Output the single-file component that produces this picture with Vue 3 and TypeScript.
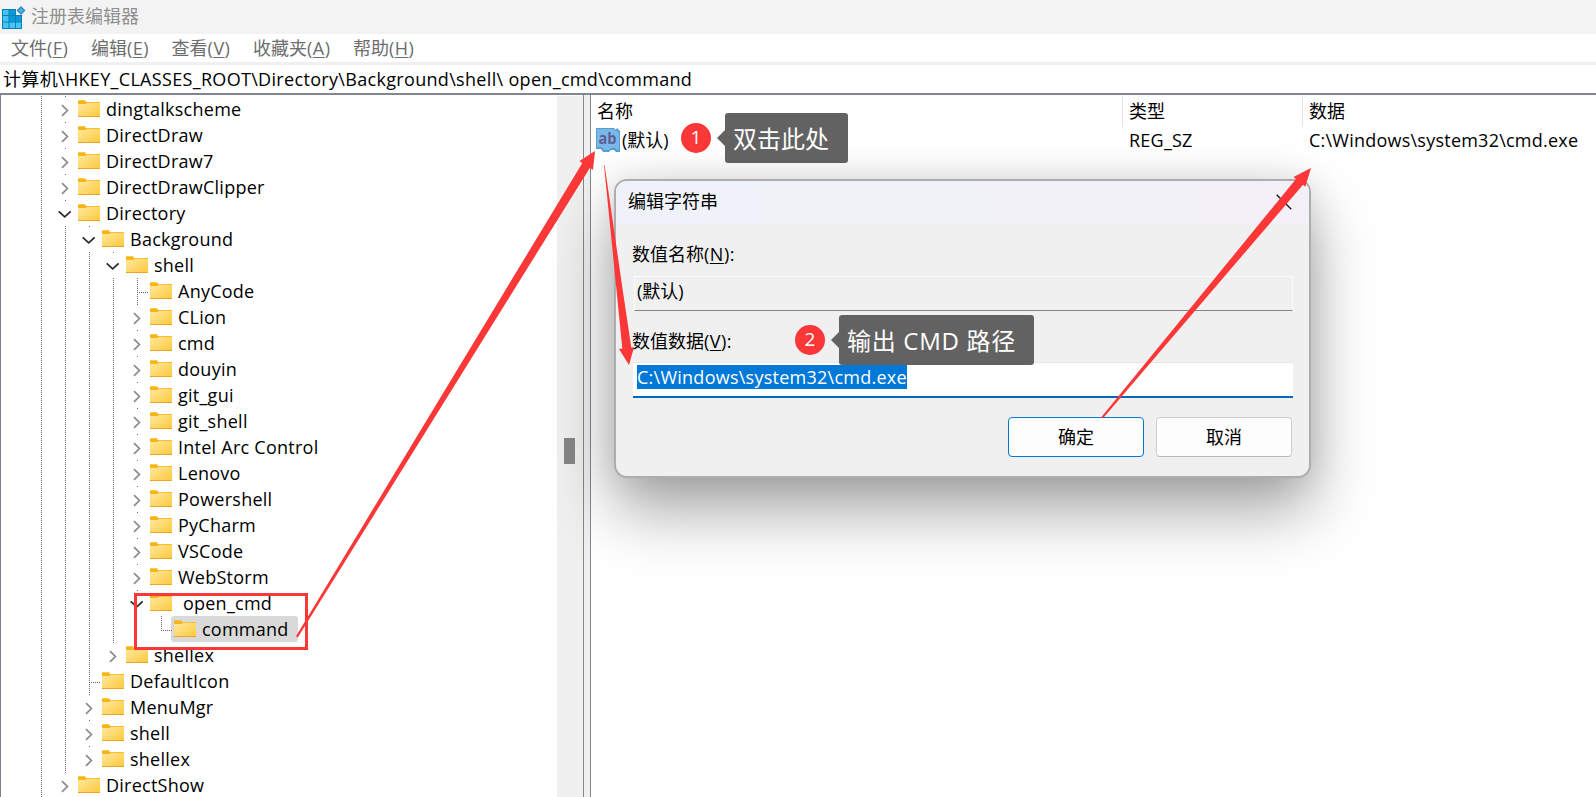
<script setup lang="ts">
type Guide = 'none' | 'line' | 'dot' | 'tee' | 'corner'
interface Node {
  label: string
  level: number
  state: 'open' | 'closed' | 'leaf'
  selected?: boolean
  guides: Guide[]
}

const raw: [string, number, Node['state']][] = [
  ['dingtalkscheme', 1, 'closed'],
  ['DirectDraw', 1, 'closed'],
  ['DirectDraw7', 1, 'closed'],
  ['DirectDrawClipper', 1, 'closed'],
  ['Directory', 1, 'open'],
  ['Background', 2, 'open'],
  ['shell', 3, 'open'],
  ['AnyCode', 4, 'leaf'],
  ['CLion', 4, 'closed'],
  ['cmd', 4, 'closed'],
  ['douyin', 4, 'closed'],
  ['git_gui', 4, 'closed'],
  ['git_shell', 4, 'closed'],
  ['Intel Arc Control', 4, 'closed'],
  ['Lenovo', 4, 'closed'],
  ['Powershell', 4, 'closed'],
  ['PyCharm', 4, 'closed'],
  ['VSCode', 4, 'closed'],
  ['WebStorm', 4, 'closed'],
  [' open_cmd', 4, 'open'],
  ['command', 5, 'leaf'],
  ['shellex', 3, 'closed'],
  ['DefaultIcon', 2, 'leaf'],
  ['MenuMgr', 2, 'closed'],
  ['shell', 2, 'closed'],
  ['shellex', 2, 'closed'],
  ['DirectShow', 1, 'closed'],
]

// An ancestor column keeps its line only while a later sibling exists at that level.
function hasNext(index: number, level: number): boolean {
  for (let i = index + 1; i < raw.length; i++) {
    if (raw[i][1] < level) return false
    if (raw[i][1] === level) return true
  }
  return level <= 1
}

const nodes: Node[] = raw.map(([label, level, state], i) => {
  const guides: Guide[] = []
  for (let l = 0; l < level; l++) guides.push(l === 0 || hasNext(i, l) ? 'line' : 'none')
  guides.push(state !== 'leaf' ? 'dot' : hasNext(i, level) ? 'tee' : 'corner')
  return { label, level, state, guides, selected: label === 'command' }
})

const menus = [
  { text: '文件', key: 'F' },
  { text: '编辑', key: 'E' },
  { text: '查看', key: 'V' },
  { text: '收藏夹', key: 'A' },
  { text: '帮助', key: 'H' },
]
</script>

<template>
  <div class="window">
    <header class="titlebar">
      <svg class="app-icon" width="24" height="24" viewBox="0 0 24 24">
        <rect x="0" y="3" width="20" height="20" fill="#0a7fb8" />
        <g fill="#45c4f6">
          <rect x="1" y="4" width="5.500" height="5" /><rect x="7.500" y="4" width="5.500" height="5" fill="#0a9ad6" />
          <rect x="1" y="10" width="5.500" height="5.500" /><rect x="7.500" y="10" width="5.500" height="5.500" fill="#0a9ad6" /><rect x="14" y="10" width="5" height="5.500" fill="#0a9ad6" />
          <rect x="1" y="16.500" width="5.500" height="5.500" /><rect x="7.500" y="16.500" width="5.500" height="5.500" /><rect x="14" y="16.500" width="5" height="5.500" />
        </g>
        <path d="M14 0h10v9H14z" fill="#f3f3f3" />
        <path d="M19 0l4.500 4.500L19 9l-4.500-4.500z" fill="#2c93c6" />
        <path d="M19 2.200l2.300 2.300L19 6.800l-2.300-2.300z" fill="#55b4dc" />
      </svg>
      <span>注册表编辑器</span>
    </header>

    <nav class="menubar">
      <span v-for="m in menus" :key="m.key">{{ m.text }}<span class="key">(<u>{{ m.key }}</u>)</span></span>
    </nav>

    <div class="address"><span>计算机\HKEY_CLASSES_ROOT\Directory\Background\shell\ open_cmd\command</span></div>

    <main class="panes">
      <section class="tree">
        <div class="rows">
          <div v-for="(n, i) in nodes" :key="i" class="row">
            <span v-for="(g, l) in n.guides" :key="l" class="guide" :class="g">
              <svg v-if="l === n.level && n.state === 'closed'" class="chev" width="24" height="26" viewBox="0 0 24 26">
                <path d="M9 9.200l5.400 5.300-5.400 5.300" fill="none" stroke="#8b8b8b" stroke-width="1.700" />
              </svg>
              <svg v-if="l === n.level && n.state === 'open'" class="chev" width="24" height="26" viewBox="0 0 24 26">
                <path d="M5.700 11.300l6 5.500 6-5.500" fill="none" stroke="#2b2b2b" stroke-width="1.800" />
              </svg>
            </span>
            <span class="item" :class="{ selected: n.selected }">
              <svg width="22" height="18" viewBox="0 0 22 18">
                <defs>
                  <linearGradient id="fold" x1="0" y1="0" x2="1" y2="1">
                    <stop offset="0" stop-color="#ffe8a0" /><stop offset="1" stop-color="#fdc93c" />
                  </linearGradient>
                </defs>
                <path d="M0 1.200Q0 .2 1 .2h6l1 1.800H22v3H0z" fill="#f7b417" />
                <path d="M0 4h7.500l1.500-1.200h13V17H0z" fill="url(#fold)" />
                <rect y="16" width="22" height="1" fill="#eaa721" />
              </svg>
              <span class="label">{{ n.label }}</span>
            </span>
          </div>
        </div>
        <div class="scrollbar"><i /></div>
      </section>
      <div class="splitter" />
      <section class="values">
        <div class="cols head"><span>名称</span><span>类型</span><span>数据</span></div>
        <div class="cols data">
          <span class="name">
            <svg width="24" height="24" viewBox="0 0 24 24">
              <path d="M0 0h18l1 1.500h1L21 0l3 3v21h-4l-2-2h-3l-2 2H7l-2-3H0z" fill="#559fd3" />
              <path d="M1 1h16l2 2h2l2 2v17h-2l-2-2h-4l-2 2H8l-2-3H1z" fill="#7ab8ea" />
              <text x="2.500" y="15.500" font-size="16" font-weight="700" fill="#5d5f94" textLength="18" lengthAdjust="spacingAndGlyphs">ab</text>
            </svg><span>(默认)</span>
          </span>
          <span>REG_SZ</span>
          <span class="path">C:\Windows\system32\cmd.exe</span>
        </div>
      </section>
    </main>

    <div class="dialog">
      <div class="dlg-title">
        <span>编辑字符串</span>
        <svg width="16" height="16" viewBox="0 0 16 16"><path d="M.7.7l14.600 14.600M15.300.7L.7 15.300" stroke="#111" stroke-width="1.300" /></svg>
      </div>
      <div class="dlg-body">
        <label>数值名称<span class="key">(<u>N</u>):</span></label>
        <div class="field readonly">(默认)</div>
        <label class="second">数值数据<span class="key">(<u>V</u>):</span></label>
        <div class="field active"><mark>C:\Windows\system32\cmd.exe</mark></div>
        <div class="buttons">
          <button class="primary">确定</button>
          <button>取消</button>
        </div>
      </div>
    </div>

    <svg class="marks" width="1596" height="797" viewBox="0 0 1596 797">
      <g fill="#fc3737">
        <path d="M296 636.300L582.200 163.200 579.500 161 595 151l-2 18.700-3.200-1.800L297.800 637.500z" />
        <path d="M604 165h.6L622.700 290l8.600 57.500 2.700-.3L629 365l-10-15.900 3.300-.5L616.500 290z" />
        <path d="M1101.200 417.300L1296 178.900l-2.500-2L1311 168l-5.700 18.700-2.300-2L1102.800 418.500z" />
      </g>
      <rect x="135.500" y="594.500" width="171" height="54" fill="none" stroke="#fc3737" stroke-width="3" />
    </svg>

    <div class="callout first"><b>1</b><p>双击此处</p></div>
    <div class="callout second"><b>2</b><p>输出 CMD 路径</p></div>
  </div>
</template>

<style>
html,
body {
  margin: 0;
  overflow: hidden;
}
</style>

<style scoped>
.window {
  position: relative;
  display: flex;
  flex-direction: column;
  width: 1596px;
  height: 797px;
  overflow: hidden;
  background: #fff;
  color: #000;
  font-family: 'Open Sans', 'Noto Sans CJK SC', sans-serif;
  font-size: 18px;
  line-height: 26px;
  white-space: pre;
}
.titlebar {
  display: flex;
  align-items: center;
  gap: 5px;
  flex: none;
  height: 34px;
  padding-left: 2px;
  background: #f3f3f3;
  color: #8f8f8f;
}
.titlebar span {
  margin-top: -2px;
}
.app-icon {
  margin-top: 2px;
}
u {
  text-underline-offset: 2px;
  text-decoration-thickness: 1px;
}
.key {
  letter-spacing: 0.5px;
}
.menubar {
  display: flex;
  align-items: center;
  gap: 22.500px;
  flex: none;
  height: 28px;
  padding-left: 11px;
  color: #6d6d6d;
}
.address {
  flex: none;
  box-sizing: border-box;
  height: 33px;
  padding: 1px 0 0 3px;
  border-top: 3px solid #f0f0f0;
  border-bottom: 2px solid #82868f;
  letter-spacing: 0.32px;
}
.panes {
  display: flex;
  flex: 1;
  min-height: 0;
}
.tree {
  display: flex;
  justify-content: space-between;
  box-sizing: border-box;
  width: 584px;
  padding-top: 1px;
  border: solid #82868f;
  border-width: 0 1px;
  overflow: hidden;
}
.rows {
  padding-left: 28px;
}
.row {
  display: flex;
  height: 26px;
}
.guide {
  position: relative;
  flex: none;
  width: 24px;
  height: 26px;
}
.guide.line {
  background: repeating-linear-gradient(#6a6a6a 0 1px, transparent 1px 2px) 12px 0 / 1px 26px no-repeat;
}
.guide.dot {
  background: linear-gradient(#6a6a6a, #6a6a6a) 12px 0 / 1px 1px no-repeat;
}
.guide.tee {
  background:
    repeating-linear-gradient(#6a6a6a 0 1px, transparent 1px 2px) 12px 0 / 1px 26px no-repeat,
    repeating-linear-gradient(90deg, #6a6a6a 0 1px, transparent 1px 2px) 12px 14px / 12px 1px no-repeat;
}
.guide.corner {
  background:
    repeating-linear-gradient(#6a6a6a 0 1px, transparent 1px 2px) 12px 0 / 1px 14px no-repeat,
    repeating-linear-gradient(90deg, #6a6a6a 0 1px, transparent 1px 2px) 12px 14px / 12px 1px no-repeat;
}
.chev {
  display: block;
}
.item {
  display: flex;
  gap: 6px;
  padding: 0 9px 0 3px;
  margin-left: -2px;
  border-radius: 3px;
}
.item svg {
  margin-top: 4px;
}
.item.selected {
  background: #d9d9d9;
}
.label {
  line-height: 26px;
  letter-spacing: 0.25px;
}
.scrollbar {
  width: 26px;
  background: #f0f0f0;
}
.scrollbar i {
  display: block;
  width: 11px;
  height: 26px;
  margin: 342px 0 0 7px;
  background: #858585;
}
.splitter {
  width: 6px;
  background: #f0f0f0;
}
.values {
  flex: 1;
  padding-top: 1px;
  border-left: 1px solid #82868f;
}
.cols {
  display: grid;
  grid-template-columns: 532px 180px 1fr;
}
.head {
  height: 30px;
  line-height: 31px;
}
.head span {
  padding-left: 6px;
}
.head span + span {
  border-left: 1px solid #e5e5e5;
  margin-left: -1px;
}
.data {
  height: 28px;
  line-height: 28px;
  letter-spacing: 0.23px;
}
.data > span {
  padding-left: 6px;
}
.data .name {
  display: flex;
  gap: 2px;
  padding-left: 5px;
  letter-spacing: 0;
  white-space: normal;
}
.name svg {
  flex: none;
  margin-top: 2px;
}
.dialog {
  position: absolute;
  left: 614px;
  top: 179px;
  box-sizing: border-box;
  width: 697px;
  height: 299px;
  border: 2px solid #adadad;
  border-radius: 13px;
  background: #f0f0f0;
  background-clip: padding-box;
  box-shadow: 0 32px 64px rgba(0, 0, 0, 0.36), 0 0 34px rgba(0, 0, 0, 0.1);
}
.dlg-title {
  display: flex;
  justify-content: space-between;
  align-items: center;
  height: 43px;
  padding: 0 17px 0 12px;
  border-radius: 11px 11px 0 0;
  background: linear-gradient(90deg, #eff3f9, #f4f0f8);
}
.dlg-title span {
  margin-top: -4px;
}
.dlg-title svg {
  margin-top: -1px;
}
.dlg-body {
  display: flex;
  flex-direction: column;
  padding: 17px 16px 0 17px;
}
.dlg-body label {
  height: 26px;
  margin-left: -1px;
}
.field {
  box-sizing: border-box;
  height: 35px;
  margin-top: 9px;
  padding-left: 4px;
}
.readonly {
  margin-left: 1px;
  border: 1px solid #fafafa;
  border-bottom-color: #858585;
  padding-left: 2px;
  line-height: 28px;
}
.dlg-body .second {
  margin-top: 17px;
}
.field.active {
  height: 36px;
  margin-top: 8px;
  background: #fff;
  border-top: 1px solid #e5e5e5;
  border-bottom: 2px solid #0067c0;
  padding-top: 1px;
}
mark {
  display: inline-block;
  height: 24px;
  line-height: 24px;
  background: #0078d7;
  color: #fff;
  letter-spacing: 0.25px;
}
.buttons {
  display: flex;
  justify-content: flex-end;
  gap: 12px;
  margin: 19px 1px 0 0;
}
button {
  box-sizing: border-box;
  width: 136px;
  height: 40px;
  padding: 0;
  border: 1px solid #cfcfcf;
  border-bottom-color: #bababa;
  border-radius: 4px;
  background: #fdfdfd;
  color: #000;
  font: inherit;
}
button.primary {
  border-color: #0078d4;
}
.marks {
  position: absolute;
  inset: 0;
}
.callout {
  position: absolute;
  display: flex;
  align-items: center;
}
.callout.first {
  left: 681px;
  top: 113px;
}
.callout.second {
  left: 795px;
  top: 315px;
}
.callout b {
  width: 30px;
  height: 30px;
  border-radius: 50%;
  background: #fc3737;
  color: #fff;
  font-size: 19px;
  font-weight: 400;
  line-height: 29px;
  text-align: center;
}
.callout p {
  position: relative;
  box-sizing: border-box;
  width: 123px;
  height: 50px;
  margin: 0 0 0 14px;
  padding-left: 8px;
  border-radius: 3px;
  background: #626262;
  color: #fff;
  font-size: 24px;
  line-height: 51px;
}
.callout.second p {
  width: 195px;
  letter-spacing: 0.7px;
}
.callout p::before {
  content: '';
  position: absolute;
  left: -8px;
  top: 17px;
  border: solid transparent;
  border-width: 8px 8px 8px 0;
  border-right-color: #626262;
}
</style>
